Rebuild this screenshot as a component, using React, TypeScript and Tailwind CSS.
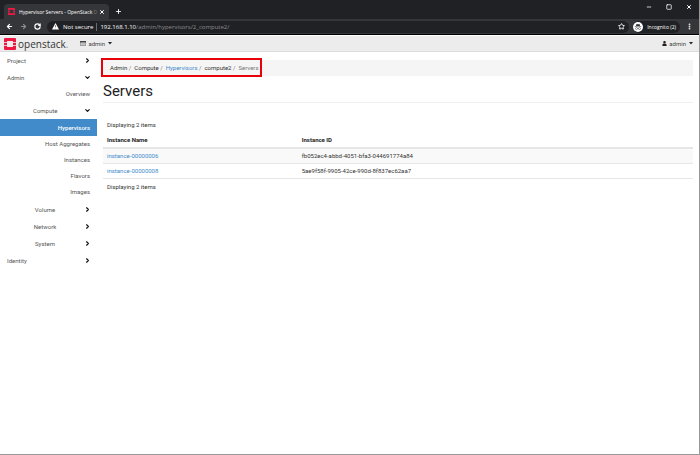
import type { ReactNode } from "react";
import { ArrowLeft, ArrowRight, ChevronDown, ChevronRight, Minus, MoreVertical, Plus, RotateCw, Square, Star, X } from "lucide-react";
import { FaUser } from "react-icons/fa";

const chromeFont = "font-['Open_Sans','Noto_Sans',sans-serif]";

const instances = [
  { name: "instance-00000006", id: "fb052ec4-abbd-4051-bfa3-044691774a84" },
  { name: "instance-00000008", id: "5ae9f58f-9905-42ce-990d-8f837ec62aa7" },
];

function OpenStackMark({ className }: { className: string }) {
  return (
    <svg viewBox="0 0 24 24" className={className} aria-hidden="true">
      <path
        fill="#ed1944"
        d="M2 0h20a2 2 0 0 1 2 2v6h-6V7a1 1 0 0 0-1-1H7a1 1 0 0 0-1 1v1H0V2a2 2 0 0 1 2-2zM0 9.500h6v5H0zM18 9.500h6v5h-6zM0 16h6v1a1 1 0 0 0 1 1h10a1 1 0 0 0 1-1v-1h6v6a2 2 0 0 1-2 2H2a2 2 0 0 1-2-2z"
      />
    </svg>
  );
}

function Caret() {
  return (
    <svg viewBox="0 0 8 5" className="w-1 shrink-0" aria-hidden="true">
      <path d="M0 0h8L4 5z" fill="#222" />
    </svg>
  );
}

function Browser() {
  return (
    <header className={`bg-[#202124] text-white ${chromeFont}`}>
      <div className="flex h-[19px] items-end justify-between">
        <div className="flex h-[15px] items-center">
          <div className="ml-1 flex h-[15px] w-[105px] items-center rounded-t bg-[#35363a] px-1">
            <OpenStackMark className="size-[7px] shrink-0" />
            <span className="ml-1 flex-1 text-[5px] leading-3 whitespace-nowrap">
              Hypervisor Servers - OpenStack <span className="text-[#77787b]">D</span>
            </span>
            <button aria-label="Close tab"><X className="size-[6px]" strokeWidth={4} /></button>
          </div>
          <button aria-label="New tab" className="ml-1.5"><Plus className="size-[7px]" strokeWidth={3} /></button>
        </div>
        <div className="flex h-[19px] items-start gap-3.5 pt-1 pr-[7px]">
          <button aria-label="Minimize"><Minus className="size-[6px]" strokeWidth={3} /></button>
          <button aria-label="Maximize"><Square className="size-[6px]" strokeWidth={3} /></button>
          <button aria-label="Close"><X className="size-[6px]" strokeWidth={4} /></button>
        </div>
      </div>
      <div className="flex h-4 items-center border-b border-black bg-[#35363a] px-1.5 text-[6px] leading-3">
        <div className="flex items-center gap-[7px]">
          <button aria-label="Back"><ArrowLeft className="size-[7px]" strokeWidth={4} /></button>
          <button aria-label="Forward" className="text-[#8c8d90]"><ArrowRight className="size-[7px]" strokeWidth={4} /></button>
          <button aria-label="Reload"><RotateCw className="size-[7px]" strokeWidth={4} /></button>
        </div>
        <div className="ml-1.5 flex h-3 flex-1 items-center rounded-full bg-[#202124] pr-1 pl-[5px] whitespace-nowrap">
          <svg viewBox="0 0 12 11" className="w-[7px]" aria-hidden="true">
            <path d="M6 0l6 11H0z" fill="#fff" />
            <path d="M5.500 4h1v3h-1zM5.500 8h1v1h-1z" fill="#202124" />
          </svg>
          <span className="ml-1">Not secure</span>
          <span className="mx-[3px] h-2 w-px bg-[#6b6c70]" />
          <span>192.168.1.10</span>
          <span className="text-[#8c8d90]">/admin/hypervisors/2_compute2/</span>
          <button aria-label="Bookmark" className="ml-auto"><Star className="size-[7px]" strokeWidth={3} /></button>
        </div>
        <button className="ml-1 flex h-3 items-center gap-1 rounded-full bg-[#202124] pr-1 text-[5px] whitespace-nowrap">
          <svg viewBox="0 0 20 20" className="size-[10px]" aria-hidden="true">
            <circle cx="10" cy="10" r="10" fill="#fff" />
            <path d="M7 4l3 .6L13 4l1.200 4H5.800zM3.500 9h13v1h-13z" fill="#35363a" />
            <g fill="none" stroke="#35363a">
              <circle cx="7" cy="13" r="2" />
              <circle cx="13" cy="13" r="2" />
              <path d="M9 13q1-1 2 0" />
            </g>
          </svg>
          Incognito (2)
        </button>
        <button aria-label="Menu" className="ml-1.5"><MoreVertical className="size-[7px]" strokeWidth={4} /></button>
      </div>
    </header>
  );
}

function TopNav() {
  return (
    <nav className="mt-px flex h-4 items-center border-b border-[#dcdcdc] bg-[#ececec] pr-1.5 pl-1 text-[#444]">
      <a href="#home" className="flex items-center gap-0.5">
        <OpenStackMark className="size-3" />
        <span className="font-['Open_Sans',sans-serif] text-[10px] leading-3 text-[#333]">
          openstack<span className="text-[#999]">.</span>
        </span>
      </a>
      <button className="ml-3 flex items-center gap-0.5">
        <svg viewBox="0 0 12 10" className="w-[6px]" aria-hidden="true">
          <path d="M.5.500h11v9H.5z" fill="#ddd" stroke="#444" />
          <path d="M0 0h12v3H0z" fill="#444" />
          <path d="M2 5h8M2 7.500h8" stroke="#888" strokeWidth="0.800" />
        </svg>
        <span className="mr-px">admin</span>
        <Caret />
      </button>
      <button className="ml-auto flex items-center gap-0.5">
        <FaUser className="size-[5px] text-[#222]" />
        <span className="mr-px">admin</span>
        <Caret />
      </button>
    </nav>
  );
}

function Group({ label, open, nested }: { label: string; open?: boolean; nested?: boolean }) {
  const Chevron = open ? ChevronDown : ChevronRight;
  return (
    <button className={`flex h-[17px] w-full items-center justify-between pr-1.5 ${nested ? "pl-[33px]" : "pl-[7px]"}`}>
      <span className={nested ? "w-6 text-center" : ""}>{label}</span>
      <Chevron className="size-[7px] text-[#111]" strokeWidth={4} />
    </button>
  );
}

function Item({ children }: { children: ReactNode }) {
  return (
    <a href="#panel" className="flex h-4 items-center justify-end pr-[7px]">
      {children}
    </a>
  );
}

function Sidebar() {
  return (
    <aside className="w-[97px] shrink-0 text-[#555]">
      <Group label="Project" />
      <Group label="Admin" open />
      <Item>Overview</Item>
      <Group label="Compute" nested open />
      <div className="pb-px">
        <a href="#hypervisors" className="flex h-[17px] items-center justify-end bg-[#428bca] pr-[7px] font-medium text-white">
          Hypervisors
        </a>
        <Item>Host Aggregates</Item>
        <Item>Instances</Item>
        <Item>Flavors</Item>
        <Item>Images</Item>
      </div>
      <Group label="Volume" nested />
      <Group label="Network" nested />
      <Group label="System" nested />
      <Group label="Identity" />
    </aside>
  );
}

function Breadcrumb() {
  return (
    <div className="relative mt-2 bg-[#f5f5f5]">
      <ol className="flex h-4 items-center gap-[3px] pl-[7px] text-[#333]">
        <li>Admin <span className="text-[#777]">/</span></li>
        <li>Compute <span className="text-[#777]">/</span></li>
        <li><a href="#hypervisors" className="text-[#428bca]">Hypervisors</a> <span className="text-[#777]">/</span></li>
        <li>compute2 <span className="text-[#777]">/</span></li>
        <li className="text-[#777]">Servers</li>
      </ol>
      <div className="pointer-events-none absolute -top-0.5 -left-0.5 h-[19px] w-[161px] border-2 border-[#e8000b]" />
    </div>
  );
}

export default function App() {
  return (
    <div className="flex min-h-screen flex-col border-r border-b border-[#999] bg-white font-[Roboto,sans-serif] text-[6px] leading-2 text-[#333]">
      <Browser />
      <TopNav />
      <div className="flex flex-1">
        <Sidebar />
        <main className="min-w-0 flex-1 pr-1.5 pl-1.5">
          <Breadcrumb />
          <h1 className="mt-1 border-b border-[#eee] text-[15px] leading-[22px] text-[#222]">Servers</h1>
          <p className="mt-[18px] pl-1">Displaying 2 items</p>
          <table className="w-full table-fixed text-left">
            <thead className="border-b-2 border-[#e6e6e6]">
              <tr className="h-[19px] align-bottom">
                <th className="w-[33%] pb-[3px] pl-1 font-bold text-[#222]">Instance Name</th>
                <th className="pb-[3px] pl-1 font-bold text-[#222]">Instance ID</th>
              </tr>
            </thead>
            <tbody>
              {instances.map((row) => (
                <tr key={row.id} className="h-[15px] border-b border-[#e6e6e6] odd:bg-[#f9f9f9]">
                  <td className="pl-1"><a href="#instance" className="text-[#428bca]">{row.name}</a></td>
                  <td className="pl-1">{row.id}</td>
                </tr>
              ))}
            </tbody>
          </table>
          <p className="mt-1 pl-1">Displaying 2 items</p>
        </main>
      </div>
    </div>
  );
}
